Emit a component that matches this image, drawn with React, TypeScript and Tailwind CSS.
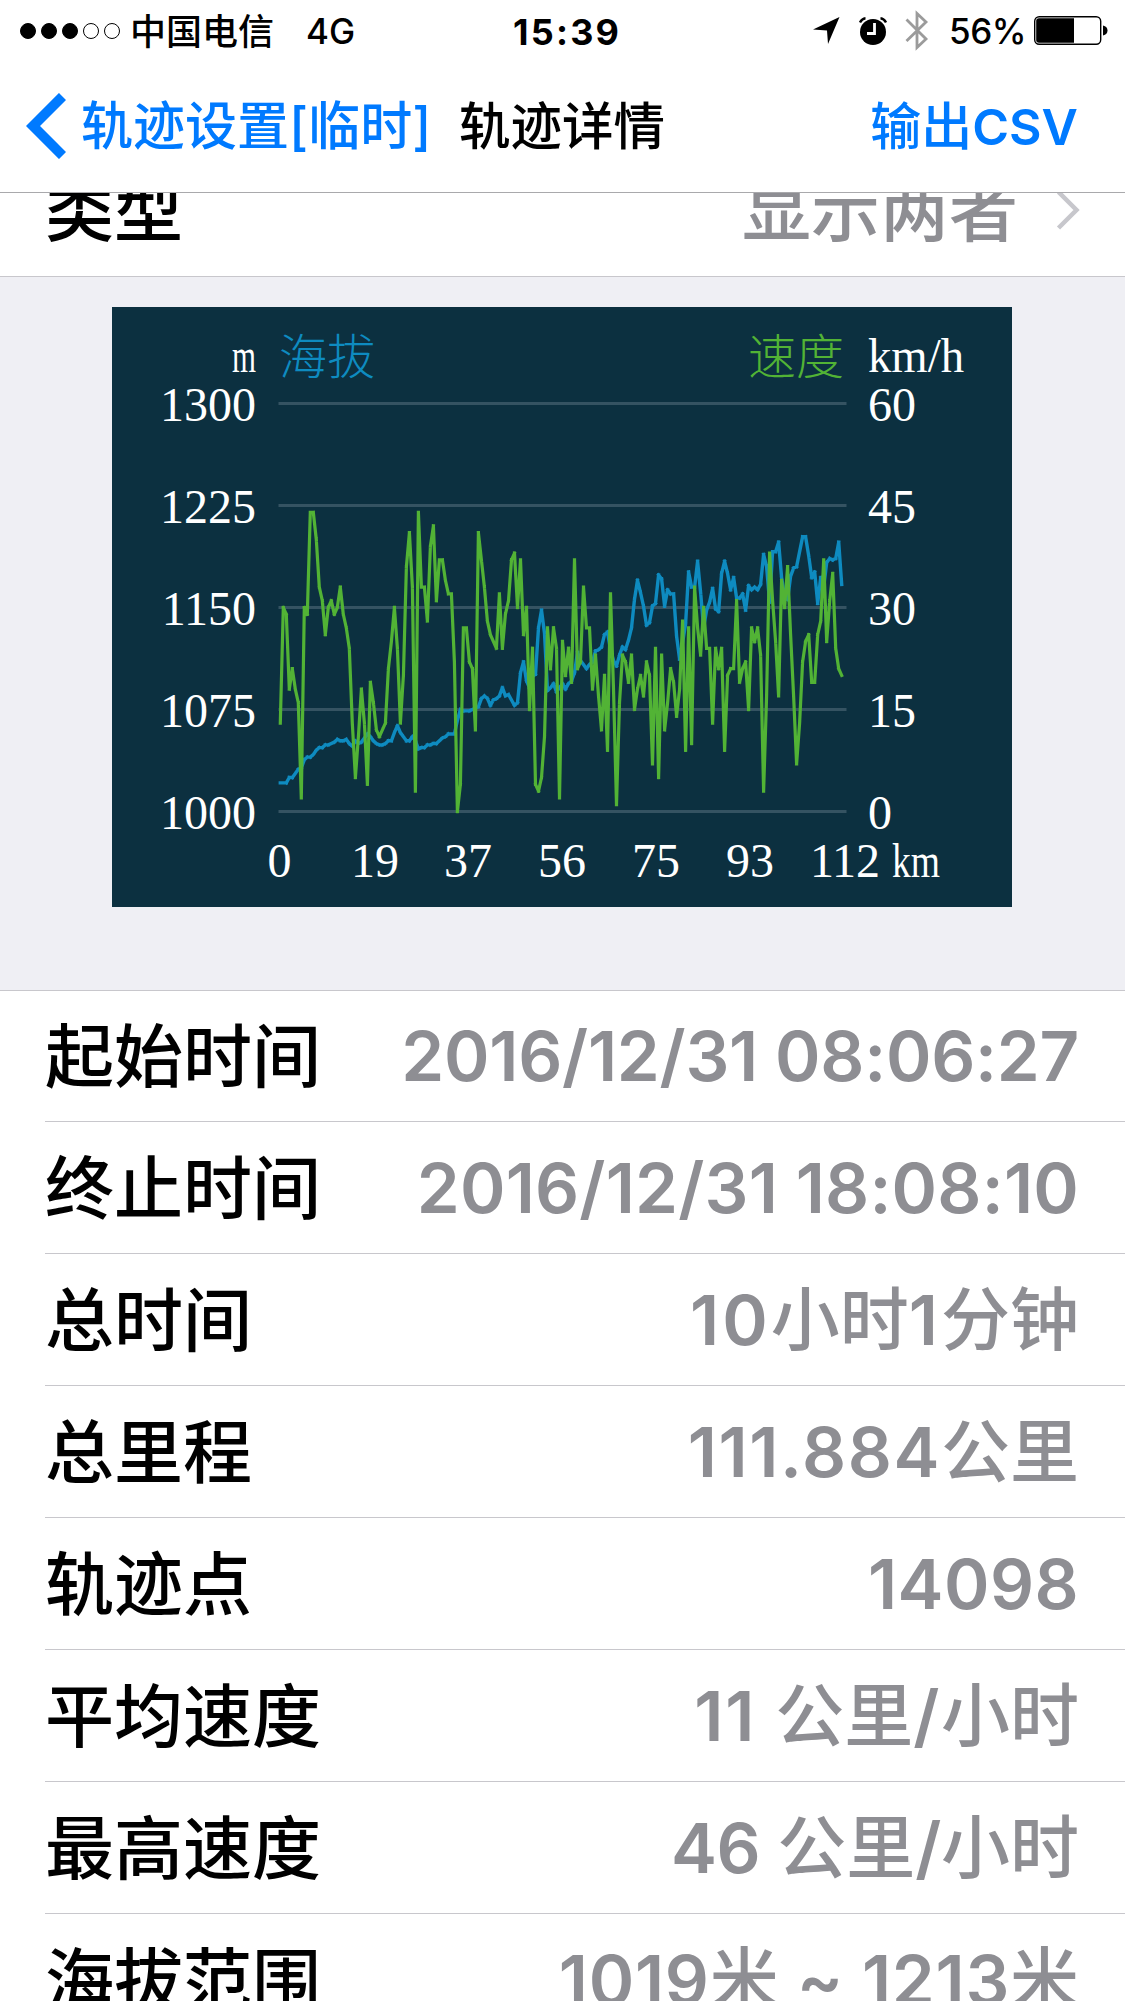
import React from 'react';
import clsx from 'clsx';

// one sample every 0.6 km
const speed = [
  13, 30, 29, 18, 21, 18, 16, 2, 30, 29, 44, 44, 40, 33, 31, 26, 30, 31, 29, 30,
  33, 29, 27, 24, 13, 5, 11, 18, 13, 4, 19, 16, 12, 11, 12, 13, 21, 25, 30, 24,
  13, 20, 36, 41, 33, 3, 44, 33, 33, 28, 39, 42, 31, 37, 37, 34, 32, 32, 22, 0,
  4, 27, 27, 22, 21, 12, 41, 37, 33, 28, 26, 25, 24, 32, 24, 29, 31, 37, 38, 30,
  37, 26, 30, 15, 24, 4, 3, 5, 11, 27, 21, 27, 24, 2, 25, 20, 24, 19, 37, 21,
  22, 33, 27, 27, 18, 23, 17, 12, 20, 9, 32, 18, 1, 16, 23, 22, 19, 23, 15, 18,
  20, 17, 22, 20, 7, 24, 5, 23, 12, 16, 21, 19, 14, 18, 28, 9, 27, 10, 33, 27,
  23, 30, 24, 24, 13, 24, 21, 24, 9, 20, 21, 21, 31, 19, 21, 22, 15, 27, 25, 27,
  23, 3, 17, 38, 31, 25, 17, 34, 30, 36, 26, 17, 7, 13, 22, 25, 26, 19, 19, 26,
  28, 37, 25, 31, 35, 24, 21, 20,
];

// metres above 1000
const altitude = [
  21, 21, 21, 25, 25, 28, 31, 32, 38, 40, 40, 42, 45, 47, 47, 49, 49, 50, 51, 53,
  52, 52, 53, 50, 48, 52, 50, 51, 54, 57, 55, 52, 50, 49, 49, 50, 52, 52, 58, 63,
  58, 55, 52, 52, 55, 52, 46, 47, 47, 49, 49, 50, 50, 52, 54, 55, 57, 57, 57, 67,
  75, 74, 74, 74, 75, 76, 77, 83, 85, 83, 78, 82, 83, 85, 91, 85, 86, 82, 78, 80,
  102, 110, 96, 91, 99, 101, 135, 148, 131, 89, 91, 94, 88, 91, 94, 90, 94, 96, 102, 117,
  111, 108, 105, 108, 110, 118, 119, 121, 130, 132, 119, 111, 107, 115, 121, 119, 126, 135, 156, 170,
  161, 151, 137, 139, 151, 153, 174, 171, 151, 163, 160, 160, 129, 112, 124, 138, 176, 165, 165, 184,
  161, 135, 148, 154, 164, 149, 147, 175, 184, 175, 163, 172, 157, 157, 160, 148, 166, 163, 165, 163,
  167, 189, 180, 154, 191, 191, 198, 172, 158, 156, 173, 179, 180, 191, 202, 202, 188, 172, 176, 153,
  172, 165, 183, 186, 185, 186, 198, 167,
];

const gridRows = [
  { y: 96.5, left: '1300', right: '60' },
  { y: 198.5, left: '1225', right: '45' },
  { y: 300.5, left: '1150', right: '30' },
  { y: 402.5, left: '1075', right: '15' },
  { y: 504.5, left: '1000', right: '0' },
];

const xLabels = [
  { x: 167.5, text: '0' },
  { x: 263, text: '19' },
  { x: 356, text: '37' },
  { x: 450, text: '56' },
  { x: 544, text: '75' },
  { x: 638, text: '93' },
  { x: 733, text: '112' },
];

const rows = [
  { label: '起始时间', value: '2016/12/31 08:06:27', tracking: 'tracking-[-0.27px]' },
  { label: '终止时间', value: '2016/12/31 18:08:10', tracking: 'tracking-[0.2px]' },
  { label: '总时间', value: '10小时1分钟', tracking: 'tracking-[3px]' },
  { label: '总里程', value: '111.884公里', tracking: 'tracking-[1.6px]' },
  { label: '轨迹点', value: '14098', tracking: 'tracking-[0.4px]' },
  { label: '平均速度', value: '11 公里/小时', tracking: 'tracking-[1.7px]' },
  { label: '最高速度', value: '46 公里/小时', tracking: 'tracking-[-0.4px]' },
  { label: '海拔范围', value: '1019米 ~ 1213米', tracking: 'tracking-[0.7px]' },
];

// every segment is its own sub-path so that each end gets a square cap
function toPath(values: number[], scale: number) {
  const points = values.map(
    (v, i) => `${(168.3 + i * 3.002).toFixed(1)} ${(504.5 - v * scale).toFixed(1)}`
  );
  return points
    .slice(1)
    .map((p, i) => `M${points[i]}L${p}`)
    .join('');
}

function StatusBar() {
  return (
    <div className="flex h-[60px] items-center pl-5 pr-[17px] pt-px text-[35px] leading-none">
      <div className="flex gap-[5px]">
        {[true, true, true, false, false].map((filled, i) => (
          <span
            key={i}
            className={clsx(
              'size-4 rounded-full border border-black',
              filled && 'bg-black'
            )}
          />
        ))}
      </div>
      <span className="ml-[10px] pt-[3px] text-[36px] font-medium">中国电信</span>
      <span className="ml-[32px] w-[50px] pt-[2px] font-medium">4G</span>
      <span className="ml-[157px] w-[300px] pt-[3px] text-[36px] font-bold tracking-[2.2px]">15:39</span>
      <svg className="h-[27px] w-[27px]" viewBox="0 0 27 27">
        <path d="M26.5 0 L15 27 L14 13.5 L0 12.5 Z" />
      </svg>
      <svg className="ml-[19px] h-[28px] w-[28px]" viewBox="0 0 28 28">
        <circle cx="14" cy="15" r="13" />
        <path d="M1 5.5 Q3 1.5 6.5 1.2" fill="none" stroke="#000" strokeWidth="2.4" />
        <path d="M27 5.5 Q25 1.5 21.5 1.2" fill="none" stroke="#000" strokeWidth="2.4" />
        <path d="M15.5 6 V16.5 H8" fill="none" stroke="#fff" strokeWidth="2.8" />
      </svg>
      <svg className="ml-[18px] h-[41px] w-[24px]" viewBox="0 0 24 41">
        <path
          d="M1.5 9.5 L21 29 L12 37.5 V3.5 L21 12 L1.5 31"
          fill="none"
          stroke="#9b9b9b"
          strokeWidth="2.8"
        />
      </svg>
      <span className="ml-[20px] pt-[2px] font-medium tracking-[-0.5px]">56%</span>
      <svg className="ml-auto h-[29px] w-[74px]" viewBox="0 0 74 29">
        <rect x="0.7" y="0.7" width="66" height="27.6" rx="4.5" fill="none" stroke="#000" strokeWidth="1.4" />
        <path d="M5 2.2 H40 V26.8 H5 Q2.2 26.8 2.2 24 V5 Q2.2 2.2 5 2.2 Z" />
        <path d="M69 9.5 Q73.5 10.5 73.5 14.5 T69 19.5 Z" />
      </svg>
    </div>
  );
}

function NavBar() {
  return (
    <div className="flex h-[133px] items-center border-b border-[#a9a9ac] pl-[26px] pr-[47px] text-[52px] font-medium leading-none text-[#007aff]">
      <svg className="h-[66px] w-[40px]" viewBox="0 0 40 66">
        <path d="M36.5 3.5 L7 33 L36.5 62.5" fill="none" stroke="#007aff" strokeWidth="10" />
      </svg>
      <span className="ml-[15px] w-[349px] whitespace-nowrap pt-[2px]">轨迹设置[临时]</span>
      <span className="ml-[29px] pt-[2px] text-[51.5px] text-black">轨迹详情</span>
      <span className="ml-auto text-[51px]">
        输出<span className="text-[50px] font-semibold">CSV</span>
      </span>
    </div>
  );
}

function TrackChart() {
  return (
    <svg
      className="h-[600px] w-[900px] bg-[#0c3040] font-['Liberation_Serif','Noto_Sans_CJK_SC',serif] text-[48px]"
      viewBox="0 0 900 600"
      fill="#fff"
    >
      {gridRows.map((row) => (
        <g key={row.y}>
          <path d={`M166.5 ${row.y}H734.5`} stroke="#355362" strokeWidth="3" />
          <text x="144" y={row.y + 17} textAnchor="end">
            {row.left}
          </text>
          <text x="756" y={row.y + 17}>
            {row.right}
          </text>
        </g>
      ))}
      <text x="120" y="65" textLength="24" lengthAdjust="spacingAndGlyphs">
        m
      </text>
      <text x="756" y="65" textLength="96" lengthAdjust="spacingAndGlyphs">
        km/h
      </text>
      <text x="167" y="67" fill="#0e8bc0" className="font-light">
        海拔
      </text>
      <text x="636" y="67" fill="#52b335" className="font-light">
        速度
      </text>
      {xLabels.map((label) => (
        <text key={label.text} x={label.x} y="569.5" textAnchor="middle">
          {label.text}
        </text>
      ))}
      <text x="780" y="569.5" textLength="48" lengthAdjust="spacingAndGlyphs">
        km
      </text>
      <path d={toPath(altitude, 1.36)} fill="none" stroke="#0e8bc0" strokeWidth="3.4" strokeLinecap="square" />
      <path d={toPath(speed, 6.8)} fill="none" stroke="#52b335" strokeWidth="3.2" strokeLinecap="square" />
    </svg>
  );
}

// digits and latin signs are set one step heavier than the Chinese characters
function Value({ text, tracking }: { text: string; tracking: string }) {
  return (
    <span className="whitespace-pre text-[#8e8e93]">
      {text.split(/([\u4e00-\u9fff]+)/).map((part, i) =>
        i % 2 === 0 ? (
          <span key={i} className={clsx('font-semibold', tracking)}>
            {part}
          </span>
        ) : (
          part
        )
      )}
    </span>
  );
}

export default function App() {
  return (
    <div className="flex h-[2001px] w-[1125px] flex-col overflow-hidden bg-[#efeff4] font-['Inter','Noto_Sans_CJK_SC',sans-serif] text-black">
      <header className="shrink-0 bg-white">
        <StatusBar />
        <NavBar />
      </header>

      <div className="flex h-[84px] shrink-0 items-end overflow-hidden border-b border-[#c8c7cc] bg-white text-[69px] font-medium">
        <div className="flex h-[132px] w-full shrink-0 items-center pl-[45px] pr-[44px] leading-none">
          <span className="pt-[3px]">类型</span>
          <span className="ml-auto pt-[3px] text-[#8e8e93]">显示两者</span>
          <svg className="ml-[38px] h-[40px] w-[25px]" viewBox="0 0 25 40">
            <path d="M2.5 2 L20.5 20 L2.5 38" fill="none" stroke="#c7c7cc" strokeWidth="4.5" />
          </svg>
        </div>
      </div>

      <div className="flex h-[713px] shrink-0 pl-[112px] pt-[30px]">
        <TrackChart />
      </div>

      <div className="shrink-0 border-t border-[#c8c7cc] bg-white pl-[45px]">
        {rows.map((row, i) => (
          <div
            key={row.label}
            className={clsx(
              'flex items-center justify-between border-b border-[#c8c7cc] pr-[46px] pt-px text-[69px] font-medium leading-none',
              i === 0 ? 'h-[131px]' : 'h-[132px]'
            )}
          >
            <span className="pt-[2px]">{row.label}</span>
            <Value text={row.value} tracking={row.tracking} />
          </div>
        ))}
      </div>
    </div>
  );
}
